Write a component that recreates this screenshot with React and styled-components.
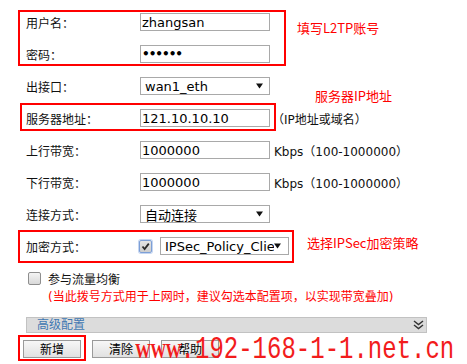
import React from "react";
import styled, { createGlobalStyle } from "styled-components";

const Global = createGlobalStyle`
  html, body { margin: 0; padding: 0; background: #fff; }
  body {
    font-family: "DejaVu Sans", "Noto Sans CJK SC", sans-serif;
    font-size: 12px;
    color: #111;
  }
`;

const Page = styled.div`
  position: relative;
  width: 467px;
  height: 364px;
  overflow: hidden;
`;

const Form = styled.div`
  display: flex;
  flex-direction: column;
  padding: 6px 0 0 26px;
`;

const Row = styled.div`
  display: flex;
  align-items: center;
  height: 32px;
`;

const Label = styled.span`
  width: 114px;
  flex-shrink: 0;
  font-size: 12px;
`;

const TextInput = styled.input`
  box-sizing: border-box;
  width: ${(p) => p.$w || 130}px;
  height: 18px;
  border: 1px solid #a9a9a9;
  padding: 0 1px;
  margin: 0;
  font-family: "DejaVu Sans", sans-serif;
  font-size: 13px;
  color: #000;
  background: #fff;
  outline: none;
  &[type="password"] {
    letter-spacing: -1px;
    font-size: 12px;
    font-weight: bold;
  }
`;

const Hint = styled.span`
  margin-left: ${(p) => p.$gap || 2}px;
  font-size: 12px;
  white-space: nowrap;
`;

const SelectBox = styled.div`
  box-sizing: border-box;
  display: flex;
  align-items: center;
  width: ${(p) => p.$w || 130}px;
  height: 18px;
  border: 1px solid #a9a9a9;
  padding: 0 ${(p) => p.$pr || 6}px 0 4px;
  background: #fff;
  font-size: 13px;
  color: #000;
`;

const SelectText = styled.span`
  flex: 1;
  overflow: hidden;
  white-space: nowrap;
`;

const Arrow = () => (
  <svg width="7" height="6" viewBox="0 0 7 6" style={{ flexShrink: 0 }}>
    <path d="M0 0.5 H7 L3.5 5.5 Z" fill="#111" />
  </svg>
);

const Select = ({ children, w, pr }) => (
  <SelectBox $w={w} $pr={pr}>
    <SelectText>{children}</SelectText>
    <Arrow />
  </SelectBox>
);

const Controls = styled.div`
  display: flex;
  align-items: center;
  gap: 8px;
`;

const CheckBox = styled.span`
  box-sizing: border-box;
  display: inline-flex;
  align-items: center;
  justify-content: center;
  width: 13px;
  height: 13px;
  margin-left: ${(p) => p.$ml || 0}px;
  border-radius: 2px;
  border: 1px solid ${(p) => (p.$checked ? "#7d9fd6" : "#8e8e8e")};
  background: ${(p) =>
    p.$checked
      ? "linear-gradient(#e4e4e4, #cdcdcd)"
      : "linear-gradient(#f4f4f4, #d9d9d9)"};
  box-shadow: ${(p) => (p.$checked ? "0 0 0 1px #c5d6f2" : "none")};
`;

const CheckRow = styled.div`
  display: flex;
  align-items: center;
  height: 14px;
  margin-top: 9px;
`;

const CheckLabel = styled.span`
  margin-left: 7px;
  font-size: 12px;
`;

const Note = styled.div`
  margin: 3px 0 0 22px;
  line-height: 18px;
  font-size: 12px;
  color: #f00;
  white-space: nowrap;
`;

const AdvancedBar = styled.div`
  box-sizing: border-box;
  display: flex;
  align-items: center;
  justify-content: space-between;
  width: 401px;
  height: 16px;
  margin-top: 11px;
  padding: 0 2px 0 10px;
  background: #dcdcdc;
  border: 1px solid #c2c2c2;
`;

const AdvancedText = styled.span`
  color: #4178b2;
  font-size: 12px;
  line-height: 14px;
`;

const ButtonRow = styled.div`
  display: flex;
  gap: 11px;
  margin: 7px 0 0 -3px;
`;

const Button = styled.button`
  box-sizing: border-box;
  width: 58px;
  height: 18px;
  padding: 0;
  border: 1px solid #9a9a9a;
  background: linear-gradient(#f7f7f7, #e1e1e1);
  font-family: "Noto Sans CJK SC", sans-serif;
  font-size: 12px;
  line-height: 16px;
  color: #000;
`;

/* annotation overlay */
const Mark = styled.div`
  position: absolute;
  box-sizing: border-box;
  left: ${(p) => p.$x}px;
  top: ${(p) => p.$y}px;
  width: ${(p) => p.$w}px;
  height: ${(p) => p.$h}px;
  border: 2px solid #f00;
  pointer-events: none;
`;

const Callout = styled.span`
  position: absolute;
  left: ${(p) => p.$x}px;
  top: ${(p) => p.$y}px;
  font-family: "Noto Sans CJK SC", sans-serif;
  font-size: 13px;
  line-height: 16px;
  color: #f00;
  white-space: nowrap;
`;

const Watermark = styled.div`
  position: absolute;
  left: 135px;
  top: 340px;
  line-height: 24px;
  color: #f21c1c;
  white-space: nowrap;
  transform: scaleY(1.32);
  transform-origin: 0 18px;
  pointer-events: none;
`;

const WmBold = styled.span`
  font-family: "Liberation Serif", serif;
  font-weight: bold;
  font-size: 16px;
  letter-spacing: -0.8px;
`;

const WmMono = styled.span`
  font-family: "Liberation Mono", monospace;
  font-size: 24px;
`;

const ChevronDown = () => (
  <svg width="11" height="10" viewBox="0 0 11 10">
    <path d="M1 1 L5.5 4.5 L10 1 M1 5 L5.5 8.5 L10 5" fill="none" stroke="#333" strokeWidth="1.5" />
  </svg>
);

const Check = () => (
  <svg width="9" height="9" viewBox="0 0 9 9">
    <path d="M1.5 4.5 L3.6 7 L7.8 1.6" fill="none" stroke="#2a2a2a" strokeWidth="1.8" />
  </svg>
);

export default function App() {
  return (
    <Page>
      <Global />
      <Form>
        <Row>
          <Label>用户名：</Label>
          <TextInput defaultValue="zhangsan" />
        </Row>
        <Row>
          <Label>密码：</Label>
          <TextInput type="password" defaultValue="123456" />
        </Row>
        <Row>
          <Label>出接口：</Label>
          <Select>wan1_eth</Select>
        </Row>
        <Row>
          <Label>服务器地址：</Label>
          <TextInput defaultValue="121.10.10.10" />
          <Hint>（IP地址或域名）</Hint>
        </Row>
        <Row>
          <Label>上行带宽：</Label>
          <TextInput defaultValue="1000000" />
          <Hint $gap={4}>Kbps（100-1000000）</Hint>
        </Row>
        <Row>
          <Label>下行带宽：</Label>
          <TextInput defaultValue="1000000" />
          <Hint $gap={4}>Kbps（100-1000000）</Hint>
        </Row>
        <Row>
          <Label>连接方式：</Label>
          <Select>自动连接</Select>
        </Row>
        <Row>
          <Label>加密方式：</Label>
          <Controls>
            <CheckBox $checked $ml={-1}>
              <Check />
            </CheckBox>
            <Select w={129} pr={7}>IPSec_Policy_Client</Select>
          </Controls>
        </Row>
        <CheckRow>
          <CheckBox $ml={2} />
          <CheckLabel>参与流量均衡</CheckLabel>
        </CheckRow>
        <Note>(当此拨号方式用于上网时，建议勾选本配置项，以实现带宽叠加)</Note>
        <AdvancedBar>
          <AdvancedText>高级配置</AdvancedText>
          <ChevronDown />
        </AdvancedBar>
        <ButtonRow>
          <Button>新增</Button>
          <Button>清除</Button>
          <Button>帮助</Button>
        </ButtonRow>
      </Form>

      <Mark $x={18} $y={10} $w={268} $h={56} />
      <Mark $x={20} $y={103} $w={256} $h={28} />
      <Mark $x={18} $y={230} $w={276} $h={33} />
      <Mark $x={18} $y={335} $w={68} $h={26} />

      <Callout $x={297} $y={20}>填写L2TP账号</Callout>
      <Callout $x={315} $y={88}>服务器IP地址</Callout>
      <Callout $x={307} $y={235}>选择IPSec加密策略</Callout>

      <Watermark>
        <WmBold>WWW</WmBold>
        <WmMono>.192-168-1-1.net.cn</WmMono>
      </Watermark>
    </Page>
  );
}
